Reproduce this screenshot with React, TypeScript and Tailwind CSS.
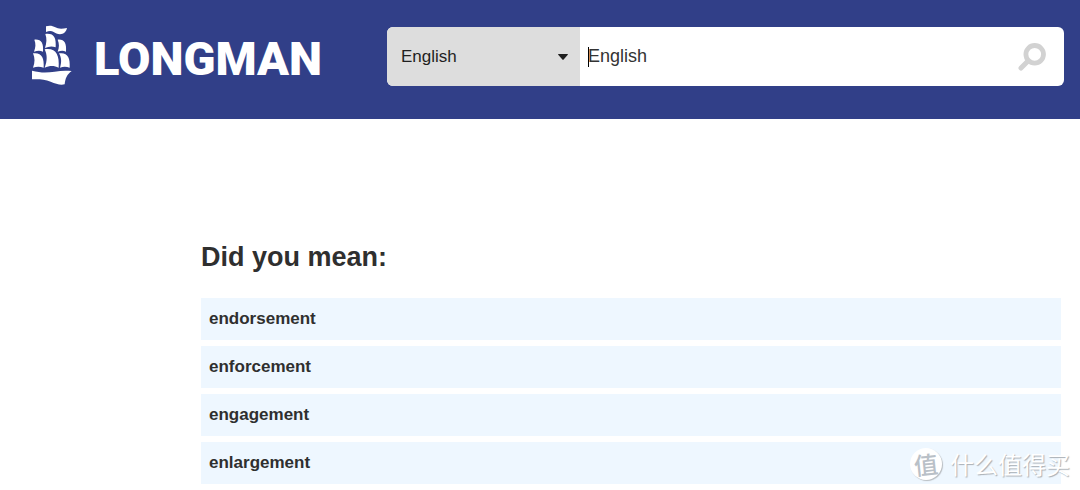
import React, { useState } from "react";

const suggestions = ["endorsement", "enforcement", "engagement", "enlargement"];

const ShipLogo = () => (
  <svg viewBox="36 30 120 180" className="h-15 w-10 shrink-0 fill-white" aria-hidden="true">
    <path d="M78 34 C88 31 98 32 106 37 C114 42 126 42 141 39 C139 50 131 57 120 58 C112 58 106 54 101 51 C94 47 86 48 78 51 Z" />
    <path d="M76 57 C102 54 109 68 107 97 C96 93 86 94 75 99 C80 84 81 71 76 57 Z" />
    <path d="M43 74 C64 72 71 84 69 110 C60 106 52 107 42 110 C47 97 48 86 43 74 Z" />
    <path d="M113 74 C133 72 140 84 138 110 C130 106 122 107 113 110 C118 97 118 86 113 74 Z" />
    <path d="M39 115 C64 111 73 127 71 158 C60 154 50 154 39 158 C45 142 45 129 39 115 Z" />
    <path d="M74 103 C108 98 119 120 116 158 C102 151 88 152 74 158 C82 138 82 120 74 103 Z" />
    <path d="M117 115 C142 111 151 127 149 158 C139 154 130 154 120 158 C125 142 125 129 117 115 Z" />
    <path d="M36 167 C62 174 82 173 104 170 C122 167 138 167 155 168 C141 178 136 190 134 208 C119 211 108 206 92 200 C74 193 56 192 36 193 Z" />
  </svg>
);

const SearchIcon = () => (
  <svg viewBox="0 0 28 28" className="size-7" fill="none" stroke="#d2d2d2" aria-hidden="true">
    <circle cx="16.7" cy="11.3" r="8.8" strokeWidth="4.8" />
    <path d="M10 18 3 25" strokeWidth="5" strokeLinecap="round" />
  </svg>
);

const SearchBar = () => {
  const [dictionary, setDictionary] = useState("English");

  return (
    <form
      className="flex h-[59px] flex-1 overflow-hidden rounded-md bg-white"
      onSubmit={(e) => e.preventDefault()}
    >
      <div className="relative w-[193px] shrink-0">
        <select
          aria-label="Dictionary"
          value={dictionary}
          onChange={(e) => setDictionary(e.target.value)}
          className="h-full w-full appearance-none bg-[#dddddd] px-3.5 text-[17px] text-[#1f1f1f] outline-none"
        >
          <option>English</option>
        </select>
        <svg
          viewBox="0 0 10 6"
          className="pointer-events-none absolute inset-y-0 right-3 my-auto h-1.5 w-2.5 fill-[#1f1f1f]"
          aria-hidden="true"
        >
          <path d="M0 0.5Q0 0 .6 0H9.4Q10 0 10 .5L5.6 5.6Q5 6.2 4.4 5.6Z" />
        </svg>
      </div>
      <div className="relative min-w-0 flex-1">
        <input
          type="text"
          aria-label="Search"
          placeholder="English"
          className="h-full w-full bg-white px-2 text-[18px] text-[#333333] outline-none placeholder:text-[#333333]"
        />
        <span className="absolute top-5 left-2 h-5 w-px bg-black" />
      </div>
      <button type="submit" aria-label="Search" className="flex w-16 shrink-0 items-center justify-center">
        <SearchIcon />
      </button>
    </form>
  );
};

const Watermark = () => (
  <div className="pointer-events-none absolute right-2.5 bottom-2.5 flex items-center gap-2 font-['Noto_Sans_CJK_SC',sans-serif] text-white">
    <span className="flex size-8 items-center justify-center rounded-full bg-white text-[24px] leading-8 font-medium text-[#b9c0c7] shadow-[1px_1px_1px_#b8bdc2]">
      <span className="-rotate-6">值</span>
    </span>
    <span className="text-[24px] leading-8 [text-shadow:1px_1px_1px_#a9afb5]">什么值得买</span>
  </div>
);

const App = () => {
  return (
    <div className="relative min-h-screen bg-white font-['Liberation_Sans',Arial,sans-serif]">
      <header className="flex h-[119px] items-start bg-[#313f88] pr-4 pl-8">
        <a href="#" className="mt-[25px] flex w-[355px] shrink-0 items-start gap-[22px]">
          <ShipLogo />
          <span className="font-['Roboto',sans-serif] text-[47px] leading-17 font-black text-white">
            LONGMAN
          </span>
        </a>
        <div className="mt-[27px] flex flex-1">
          <SearchBar />
        </div>
      </header>

      <main className="pt-30 pr-[19px] pl-[201px] text-[#2f2f2f]">
        <h1 className="text-[27px] leading-9 font-bold">Did you mean:</h1>
        <ul className="mt-[23px] flex flex-col gap-1.5">
          {suggestions.map((word) => (
            <li key={word} className="bg-[#eef7ff]">
              <a href="#" className="block px-2 text-[17px] leading-[42px] font-bold">
                {word}
              </a>
            </li>
          ))}
        </ul>
      </main>

      <Watermark />
    </div>
  );
};

export default App;
